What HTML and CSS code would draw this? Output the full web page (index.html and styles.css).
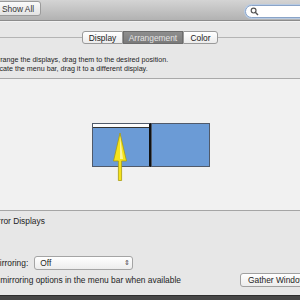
FILE: index.html
```html
<!DOCTYPE html>
<html lang="en">
<head>
    <meta charset="UTF-8">
    <title>Displays</title>
    <link rel="stylesheet" href="styles.css">
</head>
<body>
<div class="window">
    <div class="toolbar">
        <button class="show-all">Show All</button>
        <div class="search">
            <svg class="glass" width="9" height="9" viewBox="0 0 9 9">
                <circle cx="3.6" cy="3.6" r="2.4" fill="none" stroke="#555" stroke-width="1.2"/>
                <line x1="5.3" y1="5.3" x2="8" y2="8" stroke="#555" stroke-width="1.4"/>
            </svg>
        </div>
    </div>
    <div class="pane">
        <div class="tabs">
            <div class="rule"></div>
            <div class="tab first">Display</div>
            <div class="tab selected">Arrangement</div>
            <div class="tab last">Color</div>
            <div class="rule"></div>
        </div>
        <div class="help">
            <p>To rearrange the displays, drag them to the desired position.</p>
            <p>To relocate the menu bar, drag it to a different display.</p>
        </div>
        <div class="arrangement">
            <div class="screens">
                <div class="screen main">
                    <div class="menubar"></div>
                    <svg class="arrow" width="16" height="50" viewBox="0 0 16 50">
                        <path d="M8 1 L14.5 29 L9.6 29 L9.6 48.5 L6.4 48.5 L6.4 29 L1.5 29 Z" fill="#f5e31c" stroke="#a89a10" stroke-width="0.8"/>
                        <path d="M8 4 L11 27 L8 27 Z" fill="#fbf49a"/>
                    </svg>
                </div>
                <div class="screen"></div>
            </div>
        </div>
        <div class="options">
            <label class="check"><span class="box"></span>Mirror Displays</label>
            <div class="row airplay">
                <span>AirPlay Mirroring:</span>
                <div class="select"><span>Off</span><span class="updown">&#8661;</span></div>
            </div>
            <div class="row menu-opt">
                <label class="check"><span class="box"></span>Show mirroring options in the menu bar when available</label>
                <button class="gather">Gather Windows</button>
            </div>
        </div>
    </div>
    <div class="dock"><span class="dock-label">Detect Displays &nbsp; Gather Windows</span></div>
</div>
</body>
</html>
```

FILE: styles.css
```css
html, body {
    margin: 0;
    overflow: hidden;
}
body {
    font-family: "Liberation Sans", Arial, sans-serif;
    font-size: 8.4px;
    color: #1e1e1e;
    background-color: #e7e7e7;
}
.window {
    width: 300px;
    height: 300px;
    overflow: hidden;
    position: relative;
}
.toolbar {
    height: 21px;
    display: flex;
    justify-content: space-between;
    align-items: flex-start;
    background: linear-gradient(#d4d4d4, #b2b2b2);
    border-bottom: 1px solid #8c8c8c;
    box-sizing: border-box;
}
.show-all {
    margin: 1px 0 0 -14px;
    height: 15px;
    width: 55px;
    padding: 0 0 0 15px;
    font-family: inherit;
    font-size: 8.4px;
    color: #333;
    text-align: left;
    background: linear-gradient(#fbfbfb, #e2e2e2);
    border: 1px solid #9b9b9b;
    border-radius: 3px;
}
.search {
    margin: 5px -12px 0 0;
    width: 67px;
    height: 13px;
    background-color: #ffffff;
    border: 1px solid #8aa4c8;
    border-radius: 7px 0 0 7px;
    box-shadow: 0 0 0 1px #b9cbe2;
    box-sizing: border-box;
    overflow: hidden;
}
.glass {
    display: block;
    margin: 1px 0 0 4px;
}
.pane {
    border-top: 1px solid #f2f2f2;
}
.tabs {
    display: flex;
    align-items: center;
    margin-top: 9px;
}
.rule {
    flex: 1;
    height: 1px;
    background-color: #b4b4b4;
}
.tab {
    height: 13px;
    line-height: 12px;
    box-sizing: border-box;
    text-align: center;
    background: linear-gradient(#ffffff, #ececec);
    border: 1px solid #9a9a9a;
    color: #222;
}
.tab.first {
    border-radius: 3px 0 0 3px;
    width: 41px;
}
.tab.selected {
    background: linear-gradient(#8e8e8e, #7a7a7a);
    border-color: #6c6c6c;
    color: #e4e4e4;
    width: 60px;
}
.tab.last {
    border-radius: 0 3px 3px 0;
    width: 35px;
}
.help {
    margin: 12px 0 0 -22px;
    padding-bottom: 4px;
    border-bottom: 1px solid #a9a9a9;
}
.help p {
    margin: 0;
    line-height: 9px;
    font-size: 7.15px;
    white-space: nowrap;
}
.arrangement {
    height: 131px;
    background-color: #f1f1f1;
    display: flex;
    align-items: center;
    justify-content: center;
    border-bottom: 1px solid #a5a5a5;
}
.screens {
    display: flex;
    margin-left: 1px;
}
.screen {
    width: 59px;
    height: 44px;
    box-sizing: border-box;
    background-color: #6b9bd6;
    border: 1px solid #505a6a;
}
.screen.main {
    position: relative;
    border-right: 2px solid #111;
}
.menubar {
    height: 3px;
    background-color: #fdfdfd;
    border-bottom: 1px solid #333;
}
.arrow {
    position: absolute;
    left: 19px;
    top: 8px;
}
.options {
    padding-top: 5px;
}
.check {
    display: flex;
    align-items: center;
    white-space: nowrap;
}
.box {
    width: 10px;
    height: 10px;
    border: 1px solid #888;
    background: white;
    margin-right: 4px;
    box-sizing: border-box;
}
.options > .check {
    margin-left: -25px;
}
.row {
    display: flex;
    align-items: center;
    white-space: nowrap;
}
.airplay {
    margin: 30px 0 0 -36px;
    gap: 6px;
}
.select {
    width: 99px;
    height: 14px;
    box-sizing: border-box;
    background: linear-gradient(#ffffff, #ededed);
    border: 1px solid #a4a4a4;
    border-radius: 3px;
    display: flex;
    justify-content: space-between;
    align-items: center;
    padding: 0 2px 0 5px;
}
.updown {
    font-size: 7px;
    color: #444;
}
.menu-opt {
    margin: 3px 0 0 -37px;
    justify-content: space-between;
    width: 357px;
}
.gather {
    height: 14px;
    width: 80px;
    padding: 0 0 0 7px;
    text-align: left;
    font-family: inherit;
    font-size: 8.4px;
    color: #222;
    background: linear-gradient(#ffffff, #ececec);
    border: 1px solid #a0a0a0;
    border-radius: 3px;
}
.dock {
    margin-top: 8px;
    height: 8px;
    background-color: #474747;
    border-top: 1px solid #2e2e2e;
    text-align: center;
    overflow: hidden;
}
.dock-label {
    display: inline-block;
    color: #7a7a7a;
    font-size: 6px;
    line-height: 5px;
}
```
